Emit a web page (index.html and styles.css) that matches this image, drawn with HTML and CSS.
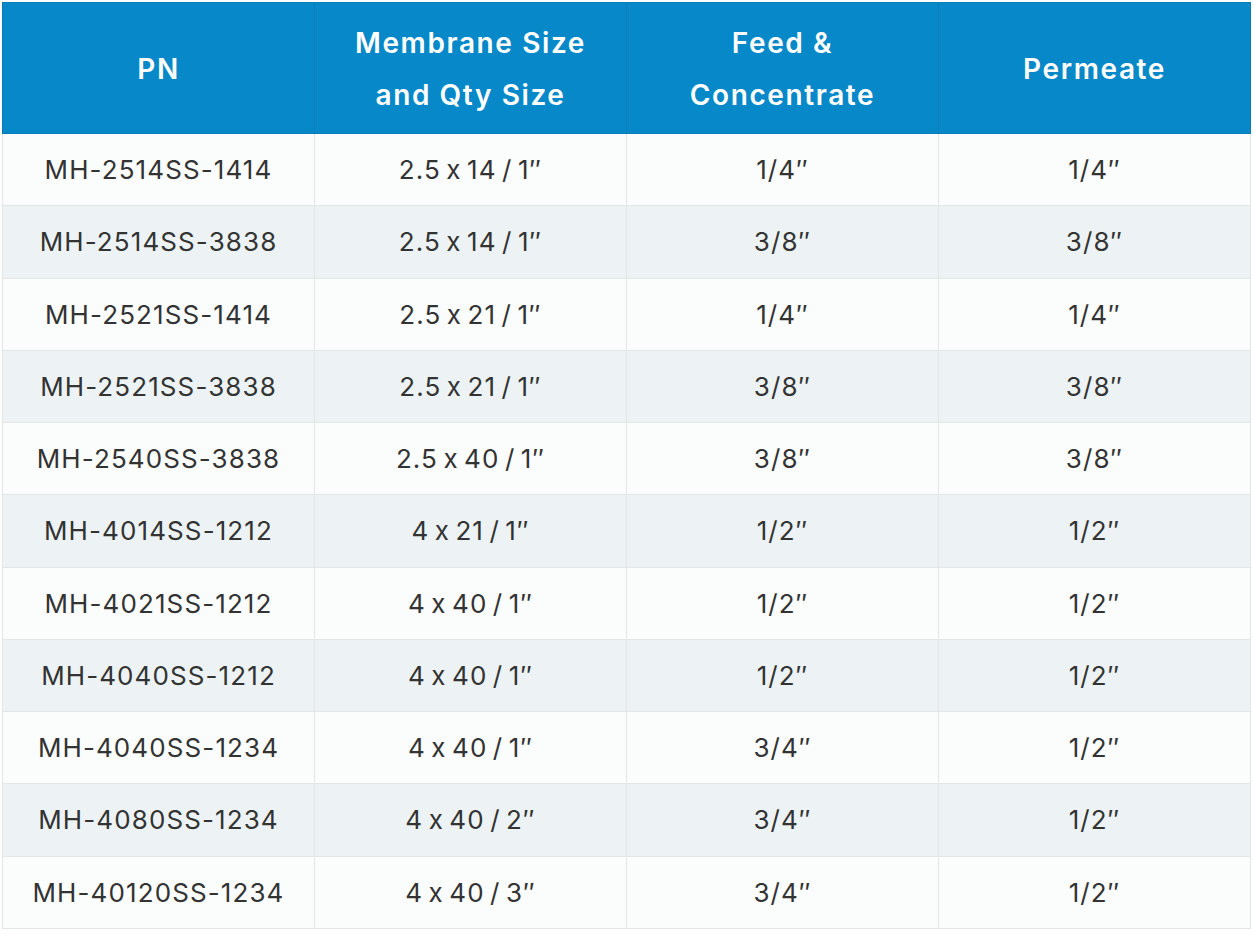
FILE: index.html
```html
<!DOCTYPE html>
<html>
<head>
<meta charset="utf-8">
<link rel="stylesheet" href="styles.css">
</head>
<body>
<table class="spec">
  <thead>
    <tr>
      <th>PN</th>
      <th>Membrane Size<br>and Qty Size</th>
      <th>Feed &amp;<br>Concentrate</th>
      <th>Permeate</th>
    </tr>
  </thead>
  <tbody>
    <tr><td>MH-2514SS-1414</td><td>2.5 x 14 / 1″</td><td>1/4″</td><td>1/4″</td></tr>
    <tr><td>MH-2514SS-3838</td><td>2.5 x 14 / 1″</td><td>3/8″</td><td>3/8″</td></tr>
    <tr><td>MH-2521SS-1414</td><td>2.5 x 21 / 1″</td><td>1/4″</td><td>1/4″</td></tr>
    <tr><td>MH-2521SS-3838</td><td>2.5 x 21 / 1″</td><td>3/8″</td><td>3/8″</td></tr>
    <tr><td>MH-2540SS-3838</td><td>2.5 x 40 / 1″</td><td>3/8″</td><td>3/8″</td></tr>
    <tr><td>MH-4014SS-1212</td><td>4 x 21 / 1″</td><td>1/2″</td><td>1/2″</td></tr>
    <tr><td>MH-4021SS-1212</td><td>4 x 40 / 1″</td><td>1/2″</td><td>1/2″</td></tr>
    <tr><td>MH-4040SS-1212</td><td>4 x 40 / 1″</td><td>1/2″</td><td>1/2″</td></tr>
    <tr><td>MH-4040SS-1234</td><td>4 x 40 / 1″</td><td>3/4″</td><td>1/2″</td></tr>
    <tr><td>MH-4080SS-1234</td><td>4 x 40 / 2″</td><td>3/4″</td><td>1/2″</td></tr>
    <tr><td>MH-40120SS-1234</td><td>4 x 40 / 3″</td><td>3/4″</td><td>1/2″</td></tr>
  </tbody>
</table>
</body>
</html>
```

FILE: styles.css
```css
html, body {
  margin: 0;
  padding: 0;
  background: #ffffff;
}
body {
  padding: 2px 3px 0 2px;
  font-family: Inter, "Noto Sans", sans-serif;
  font-feature-settings: "calt" 0;
}
.spec {
  width: 1249px;
  border-collapse: collapse;
  table-layout: fixed;
  border: 1px solid #e2e6e6;
}
.spec th,
.spec td {
  border: 1px solid #e2e6e6;
  text-align: center;
  vertical-align: middle;
  padding: 0;
  font-feature-settings: "calt" 0;
}
.spec th {
  background: #0788c8;
  border-color: #0a7db8;
  color: #ffffff;
  font-weight: 600;
  font-size: 28px;
  letter-spacing: 1.6px;
  line-height: 52px;
  height: 128px;
  padding-top: 2px;
}
.spec td {
  height: 71.25px;
  font-size: 26px;
  letter-spacing: 1.1px;
  word-spacing: -3px;
  color: #333333;
  font-weight: 400;
}
.spec tbody tr:nth-child(odd) td {
  background: #fbfdfd;
}
.spec tbody tr:nth-child(even) td {
  background: #edf3f5;
}
```
